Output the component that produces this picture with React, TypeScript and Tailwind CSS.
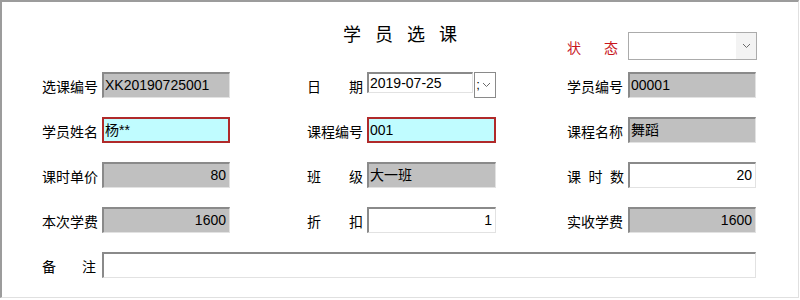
import React from "react";

const FONT = { fontFamily: '"Liberation Sans", "Noto Sans CJK SC", sans-serif' };

function Label({ text, red = false, pr = "pr-[4px]" }: { text: string; red?: boolean; pr?: string }) {
  const chars = text.split(" ");
  return (
    <div className={`h-[26px] pt-[5px] flex items-center justify-between ${pr} text-[14px] ${red ? "text-[#c8161d]" : "text-black"}`}>
      {chars.map((c, i) => (
        <span key={i}>{c}</span>
      ))}
    </div>
  );
}

function Field({
  value = "",
  kind = "gray",
  right = false,
  className = "",
}: {
  value?: string;
  kind?: "gray" | "white" | "cyan";
  right?: boolean;
  className?: string;
}) {
  const base =
    kind === "cyan"
      ? "bg-[#c0fcff] border-2 border-[#b02a2a]"
      : `${kind === "gray" ? "bg-[#c0c0c0]" : "bg-white"} border-t-2 border-l-2 border-t-[#8a8a8a] border-l-[#8a8a8a] border-b border-r border-b-[#e2e2e2] border-r-[#e2e2e2]`;
  return (
    <div
      className={`h-[26px] flex items-center text-[14px] text-black ${base} ${right ? "justify-end pr-[3px]" : "pl-[1px]"} ${className}`}
    >
      {value}
    </div>
  );
}

function Chevron() {
  return (
    <svg width="9" height="6" viewBox="0 0 9 6" fill="none">
      <path d="M1 1 L4.5 4.5 L8 1" stroke="#6b6b6b" strokeWidth="1" />
    </svg>
  );
}

export default function App() {
  return (
    <div className="bg-white w-[800px] h-[300px]" style={FONT}>
      <div className="w-[799px] h-[298px] border-t-2 border-l-2 border-t-[#9c9c9c] border-l-[#9c9c9c] border-r border-b border-r-[#e0e0e0] border-b-[#e0e0e0] flex flex-col pt-[22px]">
        {/* Row 0: title + status */}
        <div className="grid grid-cols-[1fr_auto_1fr] items-start h-[36px]">
          <div />
          <div className="h-[22px] leading-[22px] text-[18px] tracking-[14px] pl-[14px] text-black">学员选课</div>
          <div className="flex justify-end pr-[41px]">
            <div className="flex items-center mt-[8px]">
              <div className="w-[61px]">
                <Label text="状 态" red pr="pr-[10px]" />
              </div>
              <div className="w-[129px] h-[28px] border border-[#ababab] bg-white flex justify-end">
                <div className="w-[20px] h-full bg-[#f3f3f3] flex items-center justify-center">
                  <Chevron />
                </div>
              </div>
            </div>
          </div>
        </div>

        {/* Form grid */}
        <div className="mt-[12px] pl-[40px] grid grid-cols-[60px_128px_77px_60px_129px_71px_61px_128px] gap-y-[19px]">
          {/* Row 1 */}
          <Label text="选课编号" />
          <Field value="XK20190725001" />
          <div className="col-start-4">
            <Label text="日 期" />
          </div>
          <div className="flex items-start h-[26px]">
            <div className="w-[107px] h-[21px] bg-white border-t-2 border-l-2 border-t-[#8a8a8a] border-l-[#8a8a8a] border-b border-r border-b-[#e2e2e2] border-r-[#e2e2e2] flex items-center pl-[1px] text-[14px] text-black">
              2019-07-25
            </div>
            <div className="ml-[1px] w-[22px] h-[26px] border border-[#8a8a8a] bg-white flex items-center text-[13px] text-black">
              <span className="pl-[1px] w-[7px]">;</span>
              <Chevron />
            </div>
          </div>
          <div className="col-start-7">
            <Label text="学员编号" />
          </div>
          <Field value="00001" />

          {/* Row 2 */}
          <Label text="学员姓名" />
          <Field value="杨**" kind="cyan" />
          <div className="col-start-4">
            <Label text="课程编号" />
          </div>
          <Field value="001" kind="cyan" />
          <div className="col-start-7">
            <Label text="课程名称" />
          </div>
          <Field value="舞蹈" />

          {/* Row 3 */}
          <Label text="课时单价" />
          <Field value="80" right />
          <div className="col-start-4">
            <Label text="班 级" />
          </div>
          <Field value="大一班" />
          <div className="col-start-7">
            <Label text="课 时 数" />
          </div>
          <Field value="20" kind="white" right />

          {/* Row 4 */}
          <Label text="本次学费" />
          <Field value="1600" right />
          <div className="col-start-4">
            <Label text="折 扣" />
          </div>
          <Field value="1" kind="white" right />
          <div className="col-start-7">
            <Label text="实收学费" />
          </div>
          <Field value="1600" right />

          {/* Row 5 */}
          <Label text="备 注" pr="pr-[6px]" />
          <Field kind="white" className="col-span-7" />
        </div>
      </div>
    </div>
  );
}
